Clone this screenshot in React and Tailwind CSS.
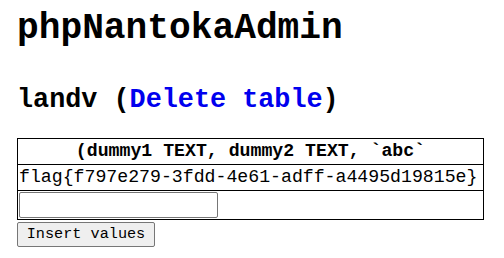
import React from 'react'

const mono = { fontFamily: '"Liberation Mono", "DejaVu Sans Mono", monospace' }

export default function App() {
  return (
    <div className="min-h-screen bg-white px-[17px] text-black" style={mono}>
      {/* title */}
      <h1 className="pt-[8px] text-[36.2px] font-bold leading-[41px]">phpNantokaAdmin</h1>

      {/* table name */}
      <h2 className="mt-[36px] text-[26.8px] font-bold leading-[30px]">
        landv (<a href="#" className="text-[#0000ee]">Delete table</a>)
      </h2>

      <form className="mt-[23px]">
        <table className="w-[467px] border border-black text-[18.2px]">
          <thead>
            <tr>
              <th className="border border-black p-[1px] text-center font-bold leading-[23px]">
                (dummy1 TEXT, dummy2 TEXT, `abc`
              </th>
            </tr>
          </thead>
          <tbody>
            <tr>
              <td className="border border-black p-[1px] leading-[23px] whitespace-nowrap">
                flag{'{'}f797e279-3fdd-4e61-adff-a4495d19815e{'}'}
              </td>
            </tr>
            <tr>
              <td className="border border-black p-[1px] leading-[0]">
                <input
                  type="text"
                  className="h-[26px] w-[199px] rounded-[2px] border border-[#767676] bg-white px-1 text-[15px]"
                />
              </td>
            </tr>
          </tbody>
        </table>
        <button
          type="button"
          className="mt-[2px] h-[25px] w-[138px] rounded-[2px] border border-[#767676] bg-[#efefef] text-[15.2px] leading-[23px] text-black"
          style={mono}
        >
          Insert values
        </button>
      </form>
    </div>
  )
}
